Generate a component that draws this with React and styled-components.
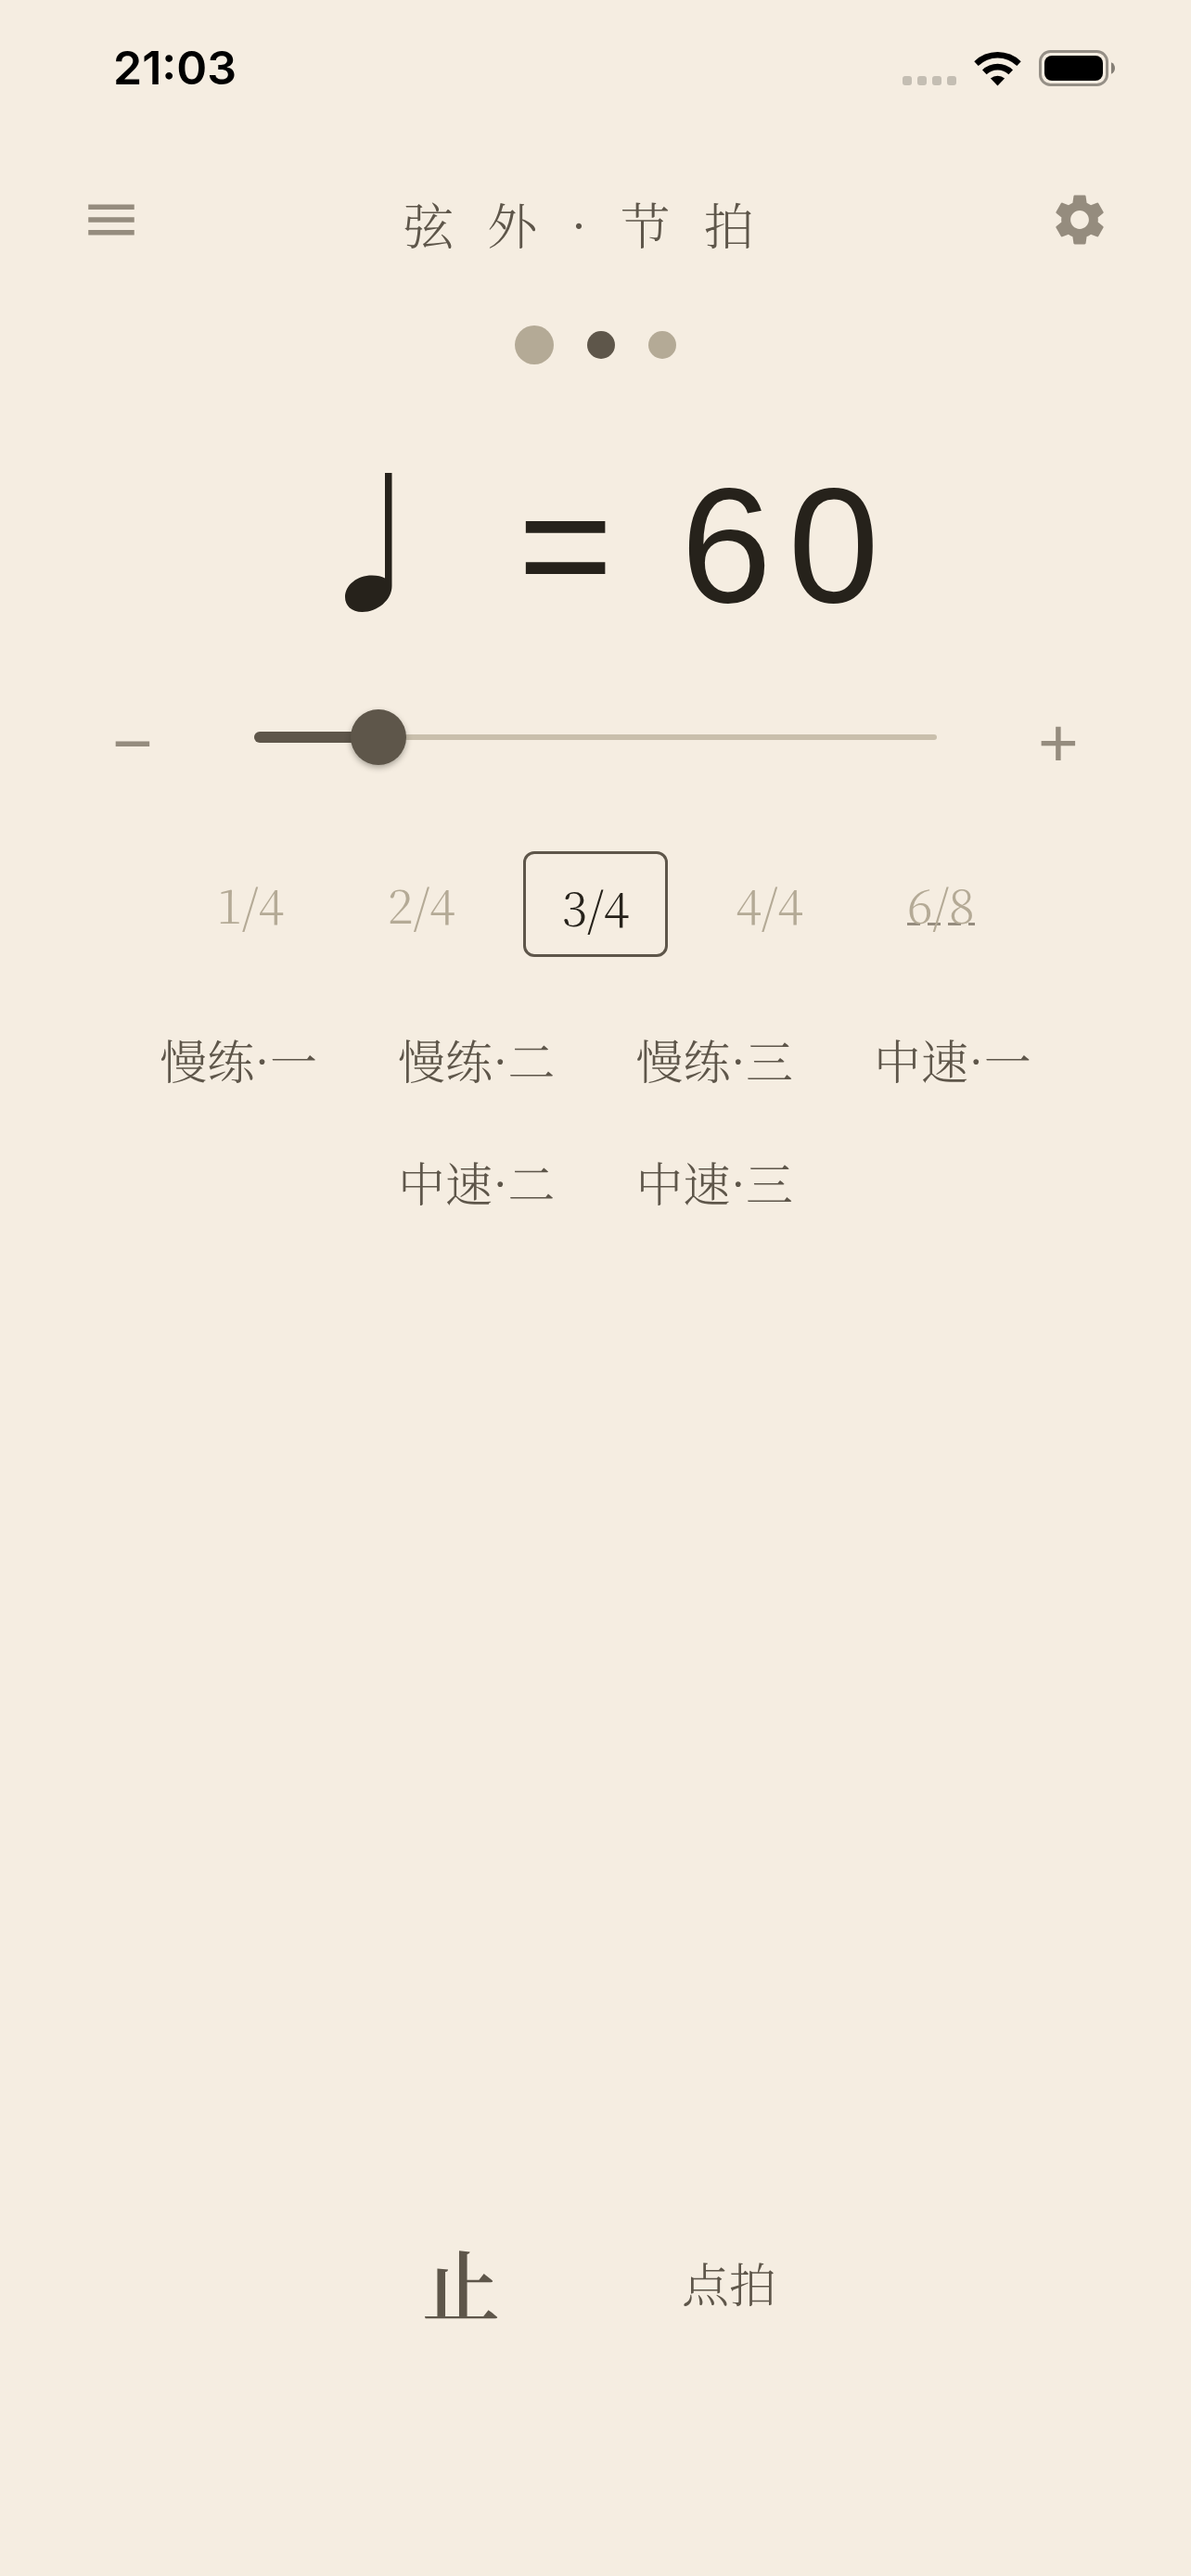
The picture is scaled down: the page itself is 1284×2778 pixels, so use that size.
import { useState } from 'react';
import styled, { createGlobalStyle, ThemeProvider } from 'styled-components';
import { MdMenu, MdSettings } from 'react-icons/md';

const theme = {
    paper: '#f5ede1',
    ink: '#26221b',
    text: '#5e564a',
    icon: '#958c7e',
    pale: '#b4aa96',
    track: '#c9bfac',
    serif: '"Noto Serif SC", "Noto Serif CJK SC", "Liberation Serif", "Noto Sans CJK SC", serif',
    sans: '"Liberation Sans", Arial, sans-serif',
};

const GlobalStyle = createGlobalStyle`
    * { box-sizing: border-box; }
    body {
        margin: 0;
        background: ${theme.paper};
        color: ${theme.text};
        font-family: ${theme.serif};
    }
    button {
        margin: 0; padding: 0;
        border: 0;
        background: none;
        color: inherit;
        font: inherit;
        cursor: pointer;
    }
`;

const Page = styled.div`
    display: flex; flex-flow: column nowrap;
    min-height: 100vh;
`;

/* status bar */
const StatusBar = styled.div`
    display: flex;
    align-items: center;
    justify-content: space-between;
    height: 146px;
    padding: 0 81px 0 122px;
`;
const Clock = styled.time`
    color: #000;
    font: 600 50px/60px Inter, sans-serif;
`;
const StatusIcons = styled.div`
    display: flex;
    align-items: flex-end;
    gap: 19px;
`;

/* header */
const Header = styled.header`
    display: flex;
    align-items: center;
    justify-content: space-between;
    height: 182px;
    padding: 0 87px;
`;
const IconButton = styled.button`
    display: flex;
    color: ${({ theme }) => theme.icon};
    font-size: 66px;
`;
const Title = styled.h1`
    margin: 0;
    padding-top: 8px;
    font-size: 54px;
    font-weight: 300;
    line-height: 72px;
    letter-spacing: 36px;
`;

/* beat dots */
const Beats = styled.div`
    display: flex;
    align-items: center; justify-content: center;
    gap: 36px;
    height: 88px;
`;
const Beat = styled.span`
    width: ${({ $strong }) => ($strong ? '42px' : '30px')};
    height: ${({ $strong }) => ($strong ? '42px' : '30px')};
    border-radius: 50%;
    background: ${({ $active, theme }) => ($active ? theme.text : theme.pale)};
`;

/* tempo */
const Tempo = styled.div`
    display: flex;
    align-items: center; justify-content: center;
    gap: 134px;
    height: 334px;
    padding: 4px 0 0 54px;
    color: ${({ theme }) => theme.ink};
`;
const TempoValue = styled.output`
    padding-top: 6px;
    font: 400 176px/200px ${({ theme }) => theme.sans};
    letter-spacing: 12px;
`;
const Bpm = styled.span`
    letter-spacing: 18px;
`;
const SliderRow = styled.div`
    display: flex;
    align-items: center;
    gap: 30px;
    padding: 0 72px;
`;
const StepButton = styled.button`
    flex: 0 0 142px;
    height: 90px;
    padding-top: 12px;
    color: ${({ theme }) => theme.icon};
    font: 400 75px/78px ${({ theme }) => theme.sans};
`;
const Slider = styled.div`
    display: grid;
    flex: 1;
    align-items: center;
    > * { grid-area: 1 / 1; }
`;
const Track = styled.div`
    display: flex;
    align-items: center;
    height: 6px;
    margin: 0 30px;
    border-radius: 3px;
    background: ${({ theme }) => theme.track};
`;
const Filled = styled.div`
    height: 12px;
    border-radius: 6px;
    background: ${({ theme }) => theme.text};
`;
const Range = styled.input`
    z-index: 1;
    width: 100%;
    height: 60px;
    margin: 0;
    appearance: none;
    background: none;
    &::-webkit-slider-thumb {
        appearance: none;
        width: 60px;
        height: 60px;
        border-radius: 50%;
        background: ${({ theme }) => theme.text};
        box-shadow: 0 3px 6px rgba(38, 34, 27, 0.35);
    }
`;

/* time signatures */
const Signatures = styled.div`
    display: flex;
    align-items: flex-start; justify-content: center;
    gap: 34px;
    height: 114px;
    margin-top: 78px;
`;
const Signature = styled.button`
    height: ${({ $selected }) => ($selected ? '114px' : '108px')};
    padding: 3px 39px 0;
    border: ${({ $selected, theme }) => ($selected ? `3px solid ${theme.text}` : '0')};
    border-radius: 12px;
    color: ${({ $selected, theme }) => ($selected ? theme.ink : theme.pale)};
    font-size: 51px;
    font-weight: 300;
    line-height: 96px;
`;
const Dashed = styled.span`
    background: linear-gradient(to right, ${({ theme }) => theme.icon} 14px, transparent 14px) 0 58px / 22px 3px repeat-x;
`;

/* presets */
const Presets = styled.div`
    display: flex; flex-flow: row wrap;
    justify-content: center;
    gap: 60px 87px;
    margin-top: 74px;
    padding: 0 120px;
`;
const TextButton = styled.button`
    font-size: 51px;
    font-weight: 300;
    line-height: 72px;
`;

/* transport */
const Transport = styled.footer`
    display: flex;
    align-items: center; justify-content: center;
    gap: 190px;
    margin-top: auto;
    padding: 0 0 257px 2px;
`;
const StopButton = styled.button`
    width: 96px;
    font-size: 84px;
    font-weight: 600;
    line-height: 120px;
`;

const SignalIcon = () => (
    <svg width="58" height="38" viewBox="0 0 58 38" fill="#c4beb3" aria-hidden="true">
        {[0, 16, 32, 48].map((x) => <rect key={x} x={x} y="27" width="10" height="10" rx="3" />)}
    </svg>
);

const WifiIcon = () => (
    <svg width="51" height="38" viewBox="0 0 51 38" aria-hidden="true">
        <path d="M0.3 11.2A36 36 0 0 1 50.7 11.2L46.3 16.1A29.5 29.5 0 0 0 4.7 16.1Z" />
        <path d="M9 20.4A24 24 0 0 1 42 20.4L37.4 25.2A17.4 17.4 0 0 0 13.6 25.2Z" />
        <path d="M17.9 29.6A11.5 11.5 0 0 1 33.1 29.6L25.5 37.5Z" />
    </svg>
);

const BatteryIcon = () => (
    <svg width="83" height="39" viewBox="0 0 83 39" aria-hidden="true">
        <rect x="1.5" y="1.5" width="72" height="36" rx="11" fill="none" stroke="#958f86" strokeWidth="3" />
        <rect x="6" y="6" width="63" height="27" rx="8" />
        <path d="M78 13.2C80.6 14.2 82 16.6 82 19.5S80.6 24.8 78 25.8Z" fill="#857f76" />
    </svg>
);

const QuarterNote = () => (
    <svg width="52" height="152" viewBox="0 0 52 152" fill="currentColor" role="img" aria-label="♩">
        <path d="M43 1H50.5V123C50.5 138 35 151 18.5 151C7 151 0 144 0 135C0 122 13 111.5 29 111.5C35 111.5 39.5 112.5 43 114.5Z" />
    </svg>
);

const MIN_BPM = 20;
const MAX_BPM = 240;

const signatures = ['1/4', '2/4', '3/4', '4/4', '6/8'];
const presets = ['慢练·一', '慢练·二', '慢练·三', '中速·一', '中速·二', '中速·三'];

const App = () => {
    const [bpm, setBpm] = useState(60);
    const [signature, setSignature] = useState('3/4');
    const filled = ((bpm - MIN_BPM) / (MAX_BPM - MIN_BPM)) * 100;

    return (
        <ThemeProvider theme={theme}>
            <GlobalStyle />
            <Page>
                <StatusBar>
                    <Clock>21:03</Clock>
                    <StatusIcons>
                        <SignalIcon />
                        <WifiIcon />
                        <BatteryIcon />
                    </StatusIcons>
                </StatusBar>
                <Header>
                    <IconButton aria-label="菜单"><MdMenu /></IconButton>
                    <Title>弦外·节拍</Title>
                    <IconButton aria-label="设置"><MdSettings /></IconButton>
                </Header>
                <Beats>
                    <Beat $strong />
                    <Beat $active />
                    <Beat />
                </Beats>
                <Tempo>
                    <QuarterNote />
                    <TempoValue>= <Bpm>{bpm}</Bpm></TempoValue>
                </Tempo>
                <SliderRow>
                    <StepButton aria-label="减慢" onClick={() => setBpm(Math.max(MIN_BPM, bpm - 1))}>−</StepButton>
                    <Slider>
                        <Track><Filled style={{ width: `${filled}%` }} /></Track>
                        <Range
                            type="range"
                            aria-label="速度"
                            min={MIN_BPM}
                            max={MAX_BPM}
                            value={bpm}
                            onChange={(e) => setBpm(Number(e.target.value))}
                        />
                    </Slider>
                    <StepButton aria-label="加快" onClick={() => setBpm(Math.min(MAX_BPM, bpm + 1))}>+</StepButton>
                </SliderRow>
                <Signatures>
                    {signatures.map((name) => (
                        <Signature
                            key={name}
                            $selected={name === signature}
                            onClick={() => setSignature(name)}
                        >
                            {name === '6/8' ? <Dashed>{name}</Dashed> : name}
                        </Signature>
                    ))}
                </Signatures>
                <Presets>
                    {presets.map((name) => <TextButton key={name}>{name}</TextButton>)}
                </Presets>
                <Transport>
                    <StopButton>止</StopButton>
                    <TextButton>点拍</TextButton>
                </Transport>
            </Page>
        </ThemeProvider>
    );
};

export default App;
